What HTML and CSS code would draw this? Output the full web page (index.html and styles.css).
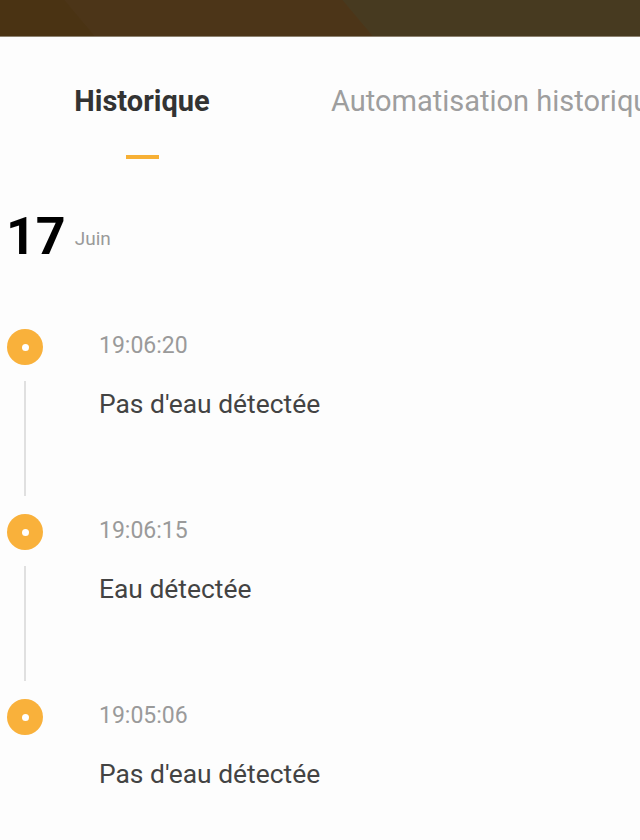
FILE: index.html
```html
<!DOCTYPE html>
<html lang="fr">
<head>
<meta charset="utf-8">
<title>Historique</title>
<link rel="stylesheet" href="styles.css">
</head>
<body>
<header class="topbar"></header>
<nav class="tabs">
  <div class="tab tab-active">
    <span class="tab-label">Historique</span>
    <span class="tab-indicator"></span>
  </div>
  <div class="tab tab-inactive">
    <span class="tab-label">Automatisation historique</span>
  </div>
</nav>
<section class="day">
  <div class="date-row">
    <span class="date-day">17</span>
    <span class="date-month">Juin</span>
  </div>
  <ul class="timeline">
    <li class="event">
      <div class="rail"><span class="dot"></span><span class="line"></span></div>
      <div class="event-body">
        <div class="event-time">19:06:20</div>
        <div class="event-text">Pas d'eau détectée</div>
      </div>
    </li>
    <li class="event">
      <div class="rail"><span class="dot"></span><span class="line"></span></div>
      <div class="event-body">
        <div class="event-time">19:06:15</div>
        <div class="event-text">Eau détectée</div>
      </div>
    </li>
    <li class="event">
      <div class="rail"><span class="dot"></span></div>
      <div class="event-body">
        <div class="event-time">19:05:06</div>
        <div class="event-text">Pas d'eau détectée</div>
      </div>
    </li>
  </ul>
</section>
</body>
</html>
```

FILE: styles.css
```css
* { box-sizing: border-box; }
html, body {
  margin: 0;
  padding: 0;
  background: #fdfdfd;
  font-family: Roboto, "Noto Sans", sans-serif;
  overflow: hidden;
}
body { width: 640px; height: 840px; }

.topbar {
  height: 37px;
  background:
    linear-gradient(50deg, #4a3313 0, #4a3313 72px, #4c3518 73px, #4c3518 285px, #473a20 286px);
  border-bottom: 1px solid #8d8270;
}

.tabs {
  display: flex;
  padding-top: 47px;
  white-space: nowrap;
  overflow: hidden;
}
.tab {
  display: flex;
  flex-direction: column;
  align-items: center;
  flex-shrink: 0;
}
.tab-active { width: 284px; }
.tab-inactive { padding-left: 47px; align-items: flex-start; }
.tab-label {
  font-size: 29px;
  line-height: 34px;
}
.tab-active .tab-label { font-weight: 700; color: #333333; }
.tab-inactive .tab-label { font-weight: 400; color: #9e9e9e; }
.tab-indicator {
  display: block;
  width: 33px;
  height: 4px;
  margin-top: 37px;
  background: #f7b035;
}

.day { padding: 48px 0 0 6px; }
.date-row {
  display: flex;
  align-items: center;
  gap: 9px;
}
.date-day {
  font-size: 52px;
  line-height: 60px;
  font-weight: 700;
  color: #000;
}
.date-month {
  font-size: 19px;
  color: #9a9a9a;
  margin-top: 3px;
}

.timeline {
  list-style: none;
  margin: 62px 0 0 0;
  padding: 0 0 0 1px;
}
.event {
  display: flex;
  gap: 56px;
  height: 185px;
}
.event:last-child { height: auto; }
.rail {
  width: 36px;
  display: flex;
  flex-direction: column;
  align-items: center;
}
.dot {
  width: 36px;
  height: 36px;
  border-radius: 50%;
  background: #f9b13b;
  display: flex;
  align-items: center;
  justify-content: center;
}
.dot::after {
  content: "";
  width: 7px;
  height: 7px;
  border-radius: 50%;
  background: #fff;
}
.line {
  width: 2px;
  height: 115px;
  margin-top: 16px;
  background: #e0e0e0;
}
.event-time {
  font-size: 23px;
  line-height: 34px;
  color: #9a9a9a;
}
.event-text {
  margin-top: 25px;
  font-size: 26.4px;
  line-height: 32px;
  color: #434343;
}
```
